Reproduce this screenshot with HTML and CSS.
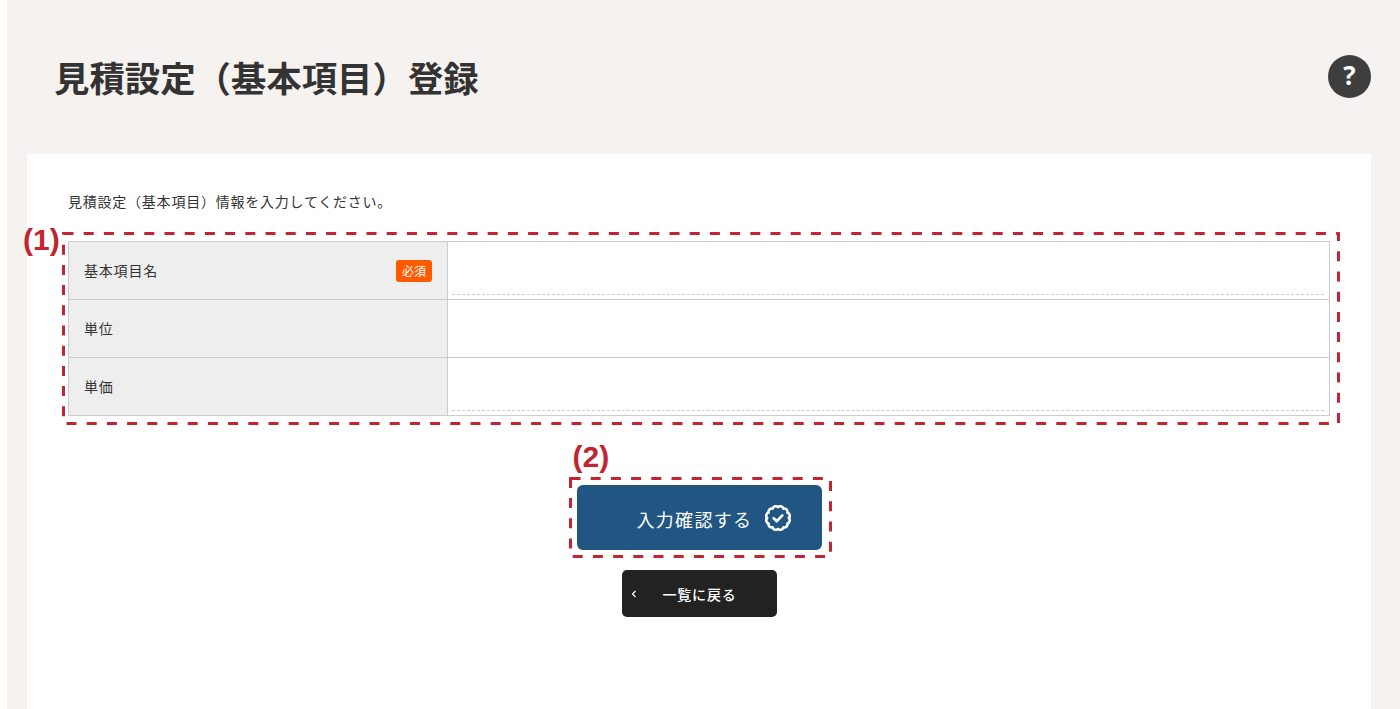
FILE: index.html
```html
<!DOCTYPE html>
<html lang="ja">
<head>
  <meta charset="UTF-8">
  <title>見積設定（基本項目）登録</title>
  <link rel="stylesheet" href="styles.css">
</head>
<body>
  <div class="page">
    <header class="page-head">
      <h1>見積設定（基本項目）登録</h1>
      <a class="help" href="#">?</a>
    </header>

    <main class="card">
      <p class="lead">見積設定（基本項目）情報を入力してください。</p>

      <form>
        <div class="form-wrap">
          <table class="form-table">
            <tr>
              <th>
                <span>基本項目名</span>
                <span class="required">必須</span>
              </th>
              <td><input type="text"></td>
            </tr>
            <tr>
              <th><span>単位</span></th>
              <td><input type="text" class="plain"></td>
            </tr>
            <tr>
              <th><span>単価</span></th>
              <td><input type="text"></td>
            </tr>
          </table>

          <span class="note note-1">(1)</span>
          <svg class="dash dash-1" width="1278" height="193">
            <rect x="1.5" y="1.5" width="1275" height="190"></rect>
          </svg>
        </div>

        <div class="actions">
          <div class="submit-wrap">
            <button type="button" class="btn-submit">
              <span class="btn-label">入力確認する</span>
              <svg class="check" width="26" height="26" viewBox="0 0 24 24">
                <path d="M12 2A3 3 0 0 1 17 3.34A3 3 0 0 1 20.66 7A3 3 0 0 1 22 12A3 3 0 0 1 20.66 17A3 3 0 0 1 17 20.66A3 3 0 0 1 12 22A3 3 0 0 1 7 20.66A3 3 0 0 1 3.34 17A3 3 0 0 1 2 12A3 3 0 0 1 3.34 7A3 3 0 0 1 7 3.34A3 3 0 0 1 12 2Z"></path>
                <path d="M8 12.2l2.8 2.8 5.2-5.4"></path>
              </svg>
            </button>

            <span class="note note-2">(2)</span>
            <svg class="dash dash-2" width="263" height="81">
              <rect x="1.5" y="1.5" width="260" height="78"></rect>
            </svg>
          </div>

          <a class="btn-back" href="#">
            <svg class="chevron" width="6" height="8" viewBox="0 0 6 8">
              <path d="M4.5 1L1.5 4l3 3"></path>
            </svg>
            <span>一覧に戻る</span>
          </a>
        </div>
      </form>
    </main>
  </div>
</body>
</html>
```

FILE: styles.css
```css
html, body {
  height: 100%;
}

body {
  margin: 0;
  padding-left: 7px;
  background: #fff;
  color: #333;
  font-family: "Noto Sans CJK JP", "Noto Sans", sans-serif;
  overflow: hidden;
}

.page {
  height: 100%;
  background: #f6f2ef;
  display: flex;
  flex-direction: column;
}

.page-head {
  height: 154px;
  box-sizing: border-box;
  padding: 55px 29px 0 47px;
  display: flex;
  justify-content: space-between;
  align-items: flex-start;
}

h1 {
  margin: 0;
  font-size: 35.4px;
  font-weight: 700;
  line-height: 44px;
  color: #333;
}

.help {
  width: 43px;
  height: 43px;
  border-radius: 50%;
  background: #3e3e3e;
  color: #fff;
  font-family: "Open Sans", sans-serif;
  font-size: 26px;
  font-weight: 700;
  line-height: 41px;
  text-align: center;
  text-decoration: none;
}

.card {
  flex: 1;
  margin: 0 29px 0 20px;
  padding: 37px 41px 0;
  background: #fff;
}

.lead {
  margin: 0 0 29px;
  font-size: 14px;
  letter-spacing: 0.77px;
  line-height: 21px;
}

.form-wrap {
  position: relative;
}

.form-table {
  width: 100%;
  border-collapse: collapse;
  table-layout: fixed;
}

.form-table th,
.form-table td {
  height: 58px;
  box-sizing: border-box;
  padding: 0;
  border: 1px solid #ccc;
}

.form-table th {
  width: 379px;
  padding: 0 15px;
  background: #eee;
  font-size: 14px;
  font-weight: 400;
  letter-spacing: 0.8px;
  text-align: left;
}

.form-table th span:first-child {
  float: left;
  line-height: 20px;
  margin-bottom: 2px;
}

.required {
  float: right;
  width: 36px;
  height: 22px;
  border-radius: 3px;
  background: #ff5a00;
  color: #fff;
  font-size: 12px;
  letter-spacing: 0;
  line-height: 22px;
  text-align: center;
}

.form-table td {
  vertical-align: bottom;
  padding: 0 5px 4px 4px;
}

.form-table input {
  display: block;
  width: 100%;
  height: 30px;
  box-sizing: border-box;
  border: 0;
  border-bottom: 1px dashed #ccc;
  background: transparent;
  outline: none;
}

.form-table input.plain {
  border-bottom: 0;
}

.note {
  position: absolute;
  color: #c32432;
  font-family: "Liberation Sans", sans-serif;
  font-size: 30px;
  font-weight: 700;
  line-height: 32px;
}

.note-1 {
  left: -45px;
  top: -17px;
}

.note-2 {
  left: -4px;
  top: -44px;
}

.dash {
  position: absolute;
  pointer-events: none;
}

.dash rect {
  fill: none;
  stroke: #c32432;
  stroke-width: 3;
  stroke-dasharray: 10 10.2;
}

.dash-1 {
  left: -6px;
  top: -9px;
}

.dash-2 {
  left: -8px;
  top: -8px;
}

.actions {
  margin-top: 69px;
  display: flex;
  flex-direction: column;
  align-items: center;
  gap: 20px;
}

.submit-wrap {
  position: relative;
}

.btn-submit {
  width: 245px;
  height: 65px;
  border: 0;
  border-radius: 6px;
  background: #215682;
  color: #fff;
  font-family: inherit;
  font-size: 18px;
  letter-spacing: 1.3px;
  padding: 0 31px 0 60px;
  display: flex;
  align-items: center;
  justify-content: space-between;
}

.btn-label {
  padding-top: 2px;
}

.check {
  flex: none;
}

.check path {
  fill: none;
  stroke: #fff;
  stroke-width: 2.4;
  stroke-linejoin: round;
  stroke-linecap: round;
}

.btn-back {
  width: 155px;
  height: 47px;
  box-sizing: border-box;
  padding-left: 9px;
  border-radius: 5px;
  background: #222;
  color: #fff;
  font-size: 14px;
  font-weight: 500;
  letter-spacing: 0.8px;
  text-decoration: none;
  display: flex;
  align-items: center;
  gap: 26px;
}

.chevron path {
  fill: none;
  stroke: #fff;
  stroke-width: 1.2;
}
```
